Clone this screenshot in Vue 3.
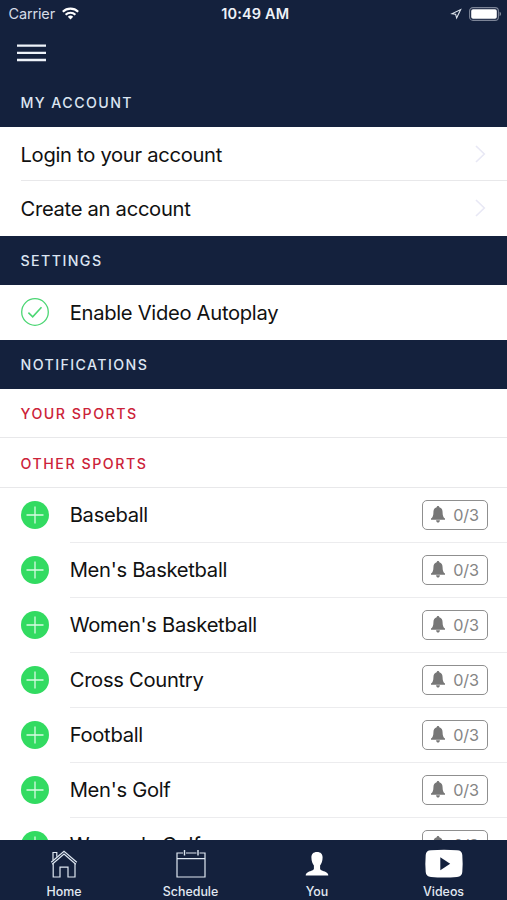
<script setup>
const account = ['Login to your account', 'Create an account']
const sports = [
  'Baseball',
  "Men's Basketball",
  "Women's Basketball",
  'Cross Country',
  'Football',
  "Men's Golf",
  "Women's Golf",
]
</script>

<template>
  <div class="screen">
    <header class="top">
      <div class="status">
        <div class="carrier">
          <span class="carrier-name">Carrier</span>
          <svg class="wifi" width="17" height="13" viewBox="0 0 17 13" fill="none" stroke="#fff" stroke-width="2.1">
            <path d="M0.8 4.8A11 11 0 0 1 16.2 4.8" />
            <path d="M3.6 7.7A7 7 0 0 1 13.4 7.7" />
            <path d="M8.5 12.6L5.8 9.8A4 4 0 0 1 11.2 9.8Z" fill="#fff" stroke="none" />
          </svg>
        </div>
        <span class="time">10:49 AM</span>
        <div class="indicators">
          <svg width="12" height="12" viewBox="0 0 12 12" fill="#dfe6ee" fill-rule="evenodd">
            <path d="M11.8 0.4L0.2 6L5.2 6.7L6.5 11.6ZM9.5 2.7L6.7 8.6L6.1 5.8L3.6 5.5Z" />
          </svg>
          <svg width="33" height="14" viewBox="0 0 33 14">
            <rect x="0.6" y="0.6" width="28.8" height="12.8" rx="3.4" fill="none" stroke="#7c8497" stroke-width="1.1" />
            <rect x="2.2" y="2.2" width="25.6" height="9.6" rx="1.8" fill="#fff" />
            <path d="M30.6 4.8Q32 5.4 32 7T30.6 9.2Z" fill="#8c94a4" />
          </svg>
        </div>
      </div>
      <button class="menu" aria-label="Menu">
        <svg width="29" height="18" viewBox="0 0 29 18" stroke="#eef3fa" stroke-width="2.3">
          <path d="M0 1.7H29M0 8.8H29M0 16H29" />
        </svg>
      </button>
      <h2 class="section first">MY ACCOUNT</h2>
    </header>

    <main class="content">
      <div v-for="(label, i) in account" :key="label" class="link" :class="'link-' + i">
        <span class="label">{{ label }}</span>
        <svg width="11" height="18" viewBox="0 0 11 18" fill="none" stroke="#e8e8f5" stroke-width="1.6">
          <path d="M1 1L9.3 9L1 17" />
        </svg>
      </div>

      <h2 class="section">SETTINGS</h2>
      <div class="setting">
        <svg class="mark" width="28" height="28" viewBox="0 0 28 28" fill="none" stroke="#4bd673" stroke-width="1.3">
          <circle cx="14" cy="14" r="13.3" />
          <path d="M7.4 14.7L11.7 18.8L20.5 9.3" stroke-width="1.6" />
        </svg>
        <span class="label autoplay">Enable Video Autoplay</span>
      </div>

      <h2 class="section">NOTIFICATIONS</h2>
      <h3 class="group">YOUR SPORTS</h3>
      <h3 class="group">OTHER SPORTS</h3>

      <div v-for="s in sports" :key="s" class="sport">
        <svg class="mark" width="28" height="28" viewBox="0 0 28 28">
          <circle cx="14" cy="14" r="14" fill="#32db61" />
          <path d="M5.5 14H22.5M14 5.5V22.5" stroke="#d8fbe2" stroke-width="1.3" />
        </svg>
        <div class="sport-body">
          <span class="label">{{ s }}</span>
          <span class="badge">
            <svg width="14" height="17" viewBox="0 0 15 17" preserveAspectRatio="none" fill="#777">
              <path d="M7.5 0C6.7 0 6.2.5 6.1 1.2C3.7 1.8 2.6 3.7 2.6 6.2C2.6 9.8 1.7 11.4 0 12.6V13.7H15V12.6C13.3 11.4 12.4 9.8 12.4 6.2C12.4 3.7 11.3 1.8 8.9 1.2C8.8.5 8.3 0 7.5 0Z" />
              <path d="M5.4 14.2H9.6C9.3 15.8 8.6 16.5 7.5 16.5S5.7 15.8 5.4 14.2Z" />
            </svg>
            <span>0/3</span>
          </span>
        </div>
      </div>
    </main>

    <nav class="tabs">
      <a class="tab">
        <svg width="28" height="30" viewBox="0 0 28 30" fill="none" stroke="#dfe8f2" stroke-width="1.2">
          <path d="M1.2 13.2L14 2.2L26.8 13.2" />
          <path d="M2.2 15.2L14 5L25.8 15.2" />
          <path d="M3 11V3.5H6.8V7.8" />
          <path d="M3.2 14.5V28H10V18.2H18V28H25V14.5" />
        </svg>
        <span>Home</span>
      </a>
      <a class="tab">
        <svg width="30" height="30" viewBox="0 0 30 30" fill="none" stroke="#dfe8f2" stroke-width="1.2">
          <path d="M7 4H1V28H29V4H23.5M10 4H20.5M1 9.7H29" />
          <path d="M8.5 1V6.5M22 1V6.5" stroke-width="1.4" />
        </svg>
        <span>Schedule</span>
      </a>
      <a class="tab">
        <svg width="24" height="30" viewBox="0 0 24 30" fill="#fff">
          <path d="M12 3C8.2 3 6.4 5.1 6.4 8.5C6.4 12.3 7.6 14.6 8.9 16.4V19.7C8.9 21.1 5.4 22 3.3 22.9C1.5 23.7.8 24.7.7 26.4H23.3C23.2 24.7 22.5 23.7 20.7 22.9C18.6 22 15.1 21.1 15.1 19.7V16.4C16.4 14.6 17.6 12.3 17.6 8.5C17.6 5.1 15.8 3 12 3Z" />
        </svg>
        <span>You</span>
      </a>
      <a class="tab">
        <svg width="38" height="30" viewBox="0 0 38 30">
          <path d="M6 1.3Q19 .3 32 1.3Q37 1.5 37.3 6Q38 14.5 37.3 23Q37 27.7 32 28Q19 29 6 28Q1 27.7.7 23Q0 14.5.7 6Q1 1.5 6 1.3Z" fill="#fff" />
          <path d="M15.3 8.3L25.2 14.7L15.3 21.2Z" fill="#14213d" />
        </svg>
        <span>Videos</span>
      </a>
    </nav>
  </div>
</template>

<style>
body {
  margin: 0;
}
</style>

<style scoped>
.screen {
  width: 507px;
  height: 900px;
  overflow: hidden;
  display: flex;
  flex-direction: column;
  background: #fff;
  color: #111;
  font-family: Inter, "Liberation Sans", sans-serif;
}
.top {
  flex: none;
  height: 126.5px;
  background: #14213d;
  display: flex;
  flex-direction: column;
}
.status {
  height: 27px;
  display: grid;
  grid-template-columns: 1fr auto 1fr;
  align-items: center;
  padding: 0 5px 0 8.5px;
  color: #eef2f8;
  font-size: 14.5px;
}
.carrier {
  display: flex;
  align-items: center;
  gap: 7px;
}
.carrier-name {
  color: #d5dce7;
  letter-spacing: -0.15px;
}
.time {
  font-weight: 600;
  font-size: 14.5px;
  letter-spacing: 0.15px;
}
.indicators {
  display: flex;
  justify-content: flex-end;
  align-items: center;
  gap: 7px;
}
.menu {
  width: 29px;
  margin: 17px 0 0 17px;
  padding: 0;
  border: 0;
  background: none;
  display: flex;
}
.section,
.group {
  box-sizing: border-box;
  margin: 0;
  height: 49px;
  flex: none;
  padding-left: 20.5px;
  display: flex;
  align-items: center;
  font-size: 14.2px;
  font-weight: 500;
  letter-spacing: 1.42px;
}
.section {
  background: #14213d;
  color: #dce5f2;
}
.first {
  margin-top: auto;
  height: 48px;
}
.content {
  flex: 1;
  min-height: 0;
  overflow: hidden;
}
.group {
  color: #cc2339;
  border-bottom: 1px solid #e8e8ea;
  height: 49.5px;
  padding-top: 1.5px;
  letter-spacing: 1.53px;
}
.label {
  font-size: 20.2px;
  letter-spacing: -0.3px;
  white-space: nowrap;
}
.link {
  box-sizing: border-box;
  height: 54.5px;
  margin-left: 20.5px;
  padding-right: 21px;
  display: flex;
  align-items: center;
  justify-content: space-between;
}
.link-0 {
  padding-top: 1.5px;
  border-bottom: 1px solid #e8e8ea;
}
.setting,
.sport {
  height: 55px;
  padding-left: 20.7px;
  display: flex;
  align-items: center;
  gap: 21px;
}
.mark {
  flex: none;
}
.sport-body {
  box-sizing: border-box;
  flex: 1;
  height: 55px;
  padding-right: 19px;
  border-bottom: 1px solid #ececee;
  display: flex;
  align-items: center;
  justify-content: space-between;
}
.badge {
  box-sizing: border-box;
  width: 66px;
  height: 30px;
  border: 1.5px solid #8f8f8f;
  border-radius: 5px;
  display: flex;
  align-items: center;
  justify-content: center;
  gap: 8px;
  font-size: 16.2px;
  letter-spacing: -0.2px;
  color: #858585;
}
.tabs {
  flex: none;
  height: 60px;
  background: #14213d;
  display: grid;
  grid-template-columns: repeat(4, 126.5px);
  padding-left: 0.8px;
}
.tab {
  padding-top: 9px;
  display: flex;
  flex-direction: column;
  align-items: center;
  gap: 5px;
  color: #e3eaf3;
  font-size: 12.4px;
  line-height: 16px;
  font-weight: 500;
}
</style>
